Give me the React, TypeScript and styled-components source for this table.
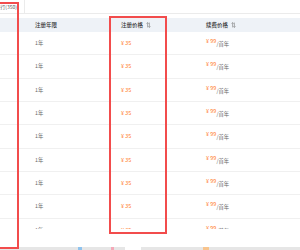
import * as React from 'react';
import styled, { createGlobalStyle } from 'styled-components';

const rows = Array.from({ length: 10 }, () => ({ term: '1年', price: '35', renew: '99' }));

const GlobalStyle = createGlobalStyle`
  html, body {
    margin: 0;
    padding: 0;
    background: #ffffff;
  }
  body {
    font-family: "Noto Sans CJK SC", "Noto Sans", sans-serif;
  }
`;

export default function App() {
  return (
    <Page>
      <GlobalStyle />
      <TabBar>
        <Tab>已注册域名进行(350)</Tab>
      </TabBar>
      <TableWrap>
        <HeaderRow>
          <Cell />
          <HeadCell>注册年限</HeadCell>
          <HeadCell>
            注册价格
            <SortIcon />
          </HeadCell>
          <HeadCell>
            续费价格
            <SortIcon />
          </HeadCell>
        </HeaderRow>
        {rows.map((r, i) => (
          <Row key={i}>
            <Cell />
            <Cell>{r.term}</Cell>
            <Cell>
              <Price>¥ {r.price}</Price>
            </Cell>
            <Cell>
              <Price $raised>¥ {r.renew}</Price>
              <Unit>/首年</Unit>
            </Cell>
          </Row>
        ))}
      </TableWrap>
      <Footer>
        <FooterMark $left={78} $width={4} $color="#8fc3ee" />
        <FooterMark $left={111} $width={3} $color="#f4a9b8" />
        <FooterMark $left={125} $width={16} $color="#ffffff" />
        <FooterMark $left={203} $width={6} $color="#f8c48d" />
      </Footer>
      <Highlight $left={-10} $top={2} $width={29} $height={247} />
      <Highlight $left={109} $top={16} $width={58} $height={218} />
    </Page>
  );
}

function SortIcon() {
  return (
    <SortSvg viewBox="0 0 8 10" width="5" height="6">
      <path d="M2.5 9V1M0.8 2.8L2.5 1l1.7 1.8" />
      <path d="M5.5 1v8M3.8 7.2l1.7 1.8 1.7-1.8" />
    </SortSvg>
  );
}

const Page = styled.div`
  position: relative;
  width: 300px;
  height: 250px;
  overflow: hidden;
  background: #ffffff;
  display: flex;
  flex-direction: column;
`;

const TabBar = styled.div`
  display: flex;
  height: 14px;
  border-bottom: 1px solid #ebebeb;
  box-sizing: border-box;
  flex-shrink: 0;
`;

const Tab = styled.div`
  width: 25px;
  flex-shrink: 0;
  display: flex;
  justify-content: flex-end;
  align-items: center;
  padding-right: 7px;
  box-sizing: border-box;
  overflow: hidden;
  white-space: nowrap;
  font-size: 5px;
  color: #555;
  border-right: 1px solid #ebebeb;
`;

const TableWrap = styled.div`
  margin-top: 4px;
  height: 211px;
  overflow: hidden;
  flex-shrink: 0;
`;

const Grid = styled.div`
  display: grid;
  grid-template-columns: 30px 86px 85px 1fr;
  align-items: center;
  box-sizing: border-box;
`;

const HeaderRow = styled(Grid)`
  height: 14px;
  background: #eef2f7;
`;

const Row = styled(Grid)`
  height: 23.33px;
  border-bottom: 1px solid #f0f0f0;
`;

const Cell = styled.div`
  padding-left: 5px;
  font-size: 5.3px;
  color: #666;
  white-space: nowrap;
  display: flex;
  align-items: baseline;
`;

const HeadCell = styled(Cell)`
  color: #333;
  font-size: 5.5px;
  font-weight: 500;
  align-items: center;
`;

const SortSvg = styled.svg`
  margin-left: 3px;
  fill: none;
  stroke: #777;
  stroke-width: 1;
`;

const Price = styled.span<{ $raised?: boolean }>`
  color: #ff7a1f;
  font-size: 5.5px;
  position: relative;
  top: ${p => (p.$raised ? '-2px' : '0')};
`;

const Unit = styled.span`
  color: #666;
  font-size: 5.3px;
  position: relative;
  top: 1px;
`;

const Footer = styled.div`
  position: relative;
  margin-top: auto;
  height: 3px;
  background: #e6e6e6;
`;

const FooterMark = styled.div<{ $left: number; $width: number; $color: string }>`
  position: absolute;
  top: 0;
  bottom: 0;
  left: ${p => p.$left}px;
  width: ${p => p.$width}px;
  background: ${p => p.$color};
`;

const Highlight = styled.div<{ $left: number; $top: number; $width: number; $height: number }>`
  position: absolute;
  left: ${p => p.$left}px;
  top: ${p => p.$top}px;
  width: ${p => p.$width}px;
  height: ${p => p.$height}px;
  border: 2px solid #f24c4c;
  box-sizing: border-box;
  pointer-events: none;
`;
